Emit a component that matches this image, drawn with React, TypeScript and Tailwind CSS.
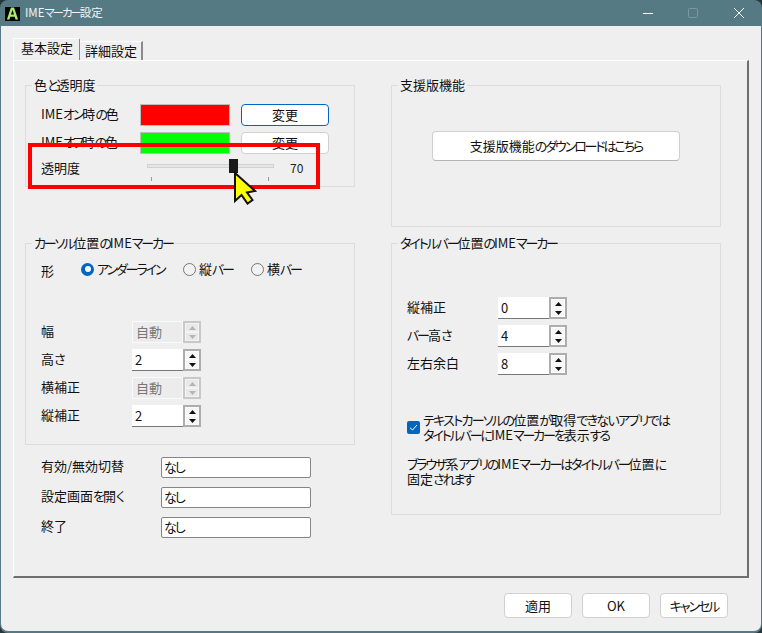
import React from "react";

const FONT = "font-['Noto_Sans_CJK_JP','Noto_Sans',sans-serif]";

function T({ children, wide }: { children: string; wide?: boolean }) {
  const parts = children.split(/([\u30A0-\u30FF\u3040-\u309F]+)/).filter(Boolean);
  return (
    <span>
      {parts.map((p, i) =>
        /^[\u30A0-\u30FF\u3040-\u309F]/.test(p) ? (
          <span
            key={i}
            className={`${wide ? "tracking-[-1.7px]" : "tracking-[-2.1px]"} [font-feature-settings:'palt']`}
          >
            {p}
          </span>
        ) : (
          <span key={i}>{p}</span>
        )
      )}
    </span>
  );
}

function Group({
  title,
  className,
  children,
}: {
  title: string;
  className: string;
  children?: React.ReactNode;
}) {
  return (
    <fieldset className={`border border-[#dcdcdc] w-[330px] px-[15px] ${className}`}>
      <legend className="ml-[-9px] px-[2px] text-[13px] leading-[18px] text-[#111] whitespace-nowrap">
        <T>{title}</T>
      </legend>
      {children}
    </fieldset>
  );
}

function Arrow({ up, disabled }: { up?: boolean; disabled?: boolean }) {
  return (
    <svg width="7" height="4" viewBox="0 0 7 4" className="block">
      <path d={up ? "M3.5 0L7 4H0Z" : "M0 0H7L3.5 4Z"} fill={disabled ? "#b5b5b5" : "#111"} />
    </svg>
  );
}

function Spin({ value, disabled }: { value: string; disabled?: boolean }) {
  const btn = disabled
    ? "bg-[#e9e9e9] border border-[#f4f4f4]"
    : "bg-[#f6f6f6] border border-[#fbfbfb]";
  return (
    <div className="flex w-[69px] h-[22px]">
      <div
        className={`w-[51px] h-full flex items-center pl-[3px] text-[13px] ${
          disabled
            ? "bg-[#ececec] text-[#777] border border-[#fafafa]"
            : "bg-white text-[#111] border-b border-[#777]"
        }`}
      >
        <T>{value}</T>
      </div>
      <div
        className={`w-[18px] h-full border-2 flex flex-col ${
          disabled ? "border-[#c8c8c8]" : "border-[#adadad]"
        }`}
      >
        <div className={`flex-1 flex items-center justify-center ${btn}`}>
          <Arrow up disabled={disabled} />
        </div>
        <div className={`flex-1 flex items-center justify-center ${btn}`}>
          <Arrow disabled={disabled} />
        </div>
      </div>
    </div>
  );
}

function SpinRow({
  label,
  value,
  disabled,
}: {
  label: string;
  value: string;
  disabled?: boolean;
}) {
  return (
    <div className="flex items-center h-[22px]">
      <div className="w-[91px] pb-[2px] text-[13px] text-[#111] whitespace-nowrap">
        <T>{label}</T>
      </div>
      <Spin value={value} disabled={disabled} />
    </div>
  );
}

function Radio({ checked }: { checked?: boolean }) {
  return checked ? (
    <span className="w-[13px] h-[13px] rounded-full bg-[#0067c0] flex items-center justify-center shrink-0">
      <span className="w-[6px] h-[6px] rounded-full bg-white" />
    </span>
  ) : (
    <span className="w-[13px] h-[13px] rounded-full border border-[#777] bg-[#f2f2f2] shrink-0" />
  );
}

function Btn({ label, className }: { label: string; className: string }) {
  return (
    <button
      className={`flex items-center justify-center bg-white rounded-[4px] border text-[13px] text-[#111] ${className}`}
    >
      <T>{label}</T>
    </button>
  );
}

function HotkeyRow({ label }: { label: string }) {
  return (
    <div className="flex items-center h-[21px] pl-[16px]">
      <div className="w-[120px] pb-[3px] text-[13px] text-[#111] whitespace-nowrap">
        <T>{label}</T>
      </div>
      <div className="w-[150px] h-[21px] bg-white border border-[#858585] rounded-[2px] flex items-center pl-[2px] pb-[1px] text-[13px] text-[#111]">
        <T>なし</T>
      </div>
    </div>
  );
}

function ColorRow({
  label,
  swatch,
  border,
  className,
}: {
  label: string;
  swatch: string;
  border: string;
  className?: string;
}) {
  return (
    <div className={`flex items-center h-[22px] ${className ?? ""}`}>
      <div className="w-[99px] pb-[2px] text-[13px] text-[#111] whitespace-nowrap">
        <T>{label}</T>
      </div>
      <div className={`w-[90px] h-[22px] border border-[#bdbdbd] ${swatch}`} />
      <Btn label="変更" className={`ml-[11px] w-[88px] h-[22px] ${border}`} />
    </div>
  );
}

export default function App() {
  return (
    <div className={`${FONT} w-[762px] h-[633px] bg-[#27363a] overflow-hidden relative`}>
      <div className="w-full h-full bg-[#567a84] rounded-[8px] flex flex-col">
        {/* Title bar */}
        <div className="h-[26px] flex items-center shrink-0">
          <div className="ml-[5px] mt-[1px] w-[15px] h-[14px] bg-black flex items-center justify-center">
            <svg width="13" height="13" viewBox="0 0 14 14">
              <path
                d="M1 13.5L5.3 0.5H8.7L13 13.5H10.2L9.4 10.5H4.6L3.8 13.5ZM5.4 8H8.6L7 3Z"
                fill="#a9ec6c"
              />
            </svg>
          </div>
          <div className="ml-[5px] text-[11.5px] text-[#f0f4f5]">
            <T>IMEマーカー設定</T>
          </div>
          <div className="ml-auto flex items-center">
            <svg width="12" height="12" viewBox="0 0 12 12" className="mr-[33px]">
              <path d="M1 6.5H11" stroke="#fff" strokeWidth="1" />
            </svg>
            <svg width="12" height="12" viewBox="0 0 12 12" className="mr-[34px]">
              <rect x="1.5" y="1.5" width="9" height="9" rx="1" fill="none" stroke="#7c99a1" />
            </svg>
            <svg width="12" height="12" viewBox="0 0 12 12" className="mr-[17px]">
              <path d="M1 1L11 11M11 1L1 11" stroke="#fff" strokeWidth="1" />
            </svg>
          </div>
        </div>

        {/* Body */}
        <div className="mx-[1px] mb-[2px] flex-1 bg-[#efefef] rounded-b-[7px] flex flex-col pl-[12px]">
          {/* Tabs */}
          <div className="h-[34px] flex items-end shrink-0">
            <div className="w-[67px] h-[22px] border-l border-t border-white border-r border-r-[#8a8a8a] rounded-t-[2px] text-[13px] text-[#111] pl-[7px] leading-[18px]">
              <T>基本設定</T>
            </div>
            <div className="w-[63px] h-[19px] border-t border-white border-r-2 border-r-[#8a8a8a] text-[13px] text-[#111] pl-[5px] leading-[18px]">
              <T>詳細設定</T>
            </div>
          </div>

          {/* Panel */}
          <div className="w-[736px] h-[518px] shrink-0 border-l border-t border-l-white border-t-white border-r-2 border-b-2 border-r-[#6f6f6f] border-b-[#6f6f6f] pl-[11px] pt-[15px] flex gap-[36px]">
            {/* Left column */}
            <div className="flex flex-col w-[330px]">
              <Group title="色と透明度" className="h-[111px] shrink-0">
                <div className="pt-[10px] flex flex-col">
                  <ColorRow label="IMEオン時の色" swatch="bg-[#ff0000]" border="border-[#0067c0]" />
                  <ColorRow
                    label="IMEオフ時の色"
                    swatch="bg-[#00ff00]"
                    border="border-[#d0d0d0]"
                    className="mt-[6px]"
                  />
                  <div className="flex items-start h-[22px] mt-[5px]">
                    <div className="w-[106px] text-[13px] text-[#111] leading-[18px]">
                      <T>透明度</T>
                    </div>
                    <div className="w-[127px] relative h-[22px]">
                      <div className="mt-[5px] h-[4px] bg-[#e6e6e6] border border-[#d2d2d2]" />
                      <div className="absolute left-[82px] top-0 w-[9px] h-[14px] bg-[#1a1a1a]" />
                      <div className="absolute left-[4px] top-[18px] w-[1px] h-[4px] bg-[#999]" />
                      <div className="absolute left-[121px] top-[18px] w-[1px] h-[4px] bg-[#999]" />
                    </div>
                    <div className="ml-[16px] text-[12px] text-[#222] leading-[18px]">70</div>
                  </div>
                </div>
              </Group>

              <Group title="カーソル位置のIMEマーカー" className="h-[211px] shrink-0 mt-[47px]">
                <div className="pt-[7px] flex items-center h-[27px] text-[13px] text-[#111]">
                  <div className="w-[40px] pt-[3px]">
                    <T>形</T>
                  </div>
                  <div className="flex items-center w-[102px] gap-[3px]">
                    <Radio checked />
                    <T>アンダーライン</T>
                  </div>
                  <div className="flex items-center w-[68px] gap-[3px]">
                    <Radio />
                    <T>縦バー</T>
                  </div>
                  <div className="flex items-center gap-[3px]">
                    <Radio />
                    <T>横バー</T>
                  </div>
                </div>
                <div className="mt-[42px] flex flex-col gap-[6px]">
                  <SpinRow label="幅" value="自動" disabled />
                  <SpinRow label="高さ" value="2" />
                  <SpinRow label="横補正" value="自動" disabled />
                  <SpinRow label="縦補正" value="2" />
                </div>
              </Group>

              <div className="mt-[12px] flex flex-col gap-[9px]">
                <HotkeyRow label="有効/無効切替" />
                <HotkeyRow label="設定画面を開く" />
                <HotkeyRow label="終了" />
              </div>
            </div>

            {/* Right column */}
            <div className="flex flex-col w-[330px]">
              <Group title="支援版機能" className="h-[151px] shrink-0">
                <div className="pt-[37px] pl-[25px]">
                  <Btn
                    label="支援版機能のダウンロードはこちら"
                    className="w-[248px] h-[30px] border-[#d0d0d0] border-b-[#b5b5b5]"
                  />
                </div>
              </Group>
              <Group title="タイトルバー位置のIMEマーカー" className="h-[281px] shrink-0 mt-[7px]">
                <div className="pt-[45px] flex flex-col gap-[6px]">
                  <SpinRow label="縦補正" value="0" />
                  <SpinRow label="バー高さ" value="4" />
                  <SpinRow label="左右余白" value="8" />
                </div>
                <div className="mt-[37px] flex items-start gap-[3px] text-[13px] leading-[15px] text-[#111]">
                  <span className="mt-[9px] w-[13px] h-[13px] rounded-[2px] bg-[#0067c0] flex items-center justify-center shrink-0">
                    <svg width="9" height="9" viewBox="0 0 9 9">
                      <path d="M1 4.8L3.5 7L8 2" fill="none" stroke="#fff" strokeWidth="1" />
                    </svg>
                  </span>
                  <div>
                    <div className="whitespace-nowrap">
                      <T wide>テキストカーソルの位置が取得できないアプリでは</T>
                    </div>
                    <div className="whitespace-nowrap">
                      <T>タイトルバーにIMEマーカーを表示する</T>
                    </div>
                  </div>
                </div>
                <div className="mt-[14px] text-[13px] leading-[15px] text-[#111]">
                  <div className="whitespace-nowrap">
                    <T>ブラウザ系アプリのIMEマーカーはタイトルバー位置に</T>
                  </div>
                  <div className="whitespace-nowrap">
                    <T>固定されます</T>
                  </div>
                </div>
              </Group>
            </div>
          </div>

          {/* Footer */}
          <div className="flex justify-end gap-[10px] pr-[33px] pt-[15px]">
            <Btn label="適用" className="w-[68px] h-[25px] border-[#d0d0d0]" />
            <Btn label="OK" className="w-[68px] h-[25px] border-[#d0d0d0]" />
            <Btn label="キャンセル" className="w-[68px] h-[25px] border-[#d0d0d0]" />
          </div>
        </div>
      </div>

      {/* Annotation overlay */}
      <div className="absolute left-[28px] top-[143px] w-[292px] h-[46px] border-[4px] border-[#ff0000]" />
      <svg className="absolute left-[228px] top-[168px]" width="32" height="38" viewBox="228 168 32 38">
        <path
          d="M235 173V201L241.5 195L247.5 203.5L252.5 200L247 192.5L255 191Z"
          fill="#ffff00"
          stroke="#111"
          strokeWidth="2"
        />
      </svg>
    </div>
  );
}
